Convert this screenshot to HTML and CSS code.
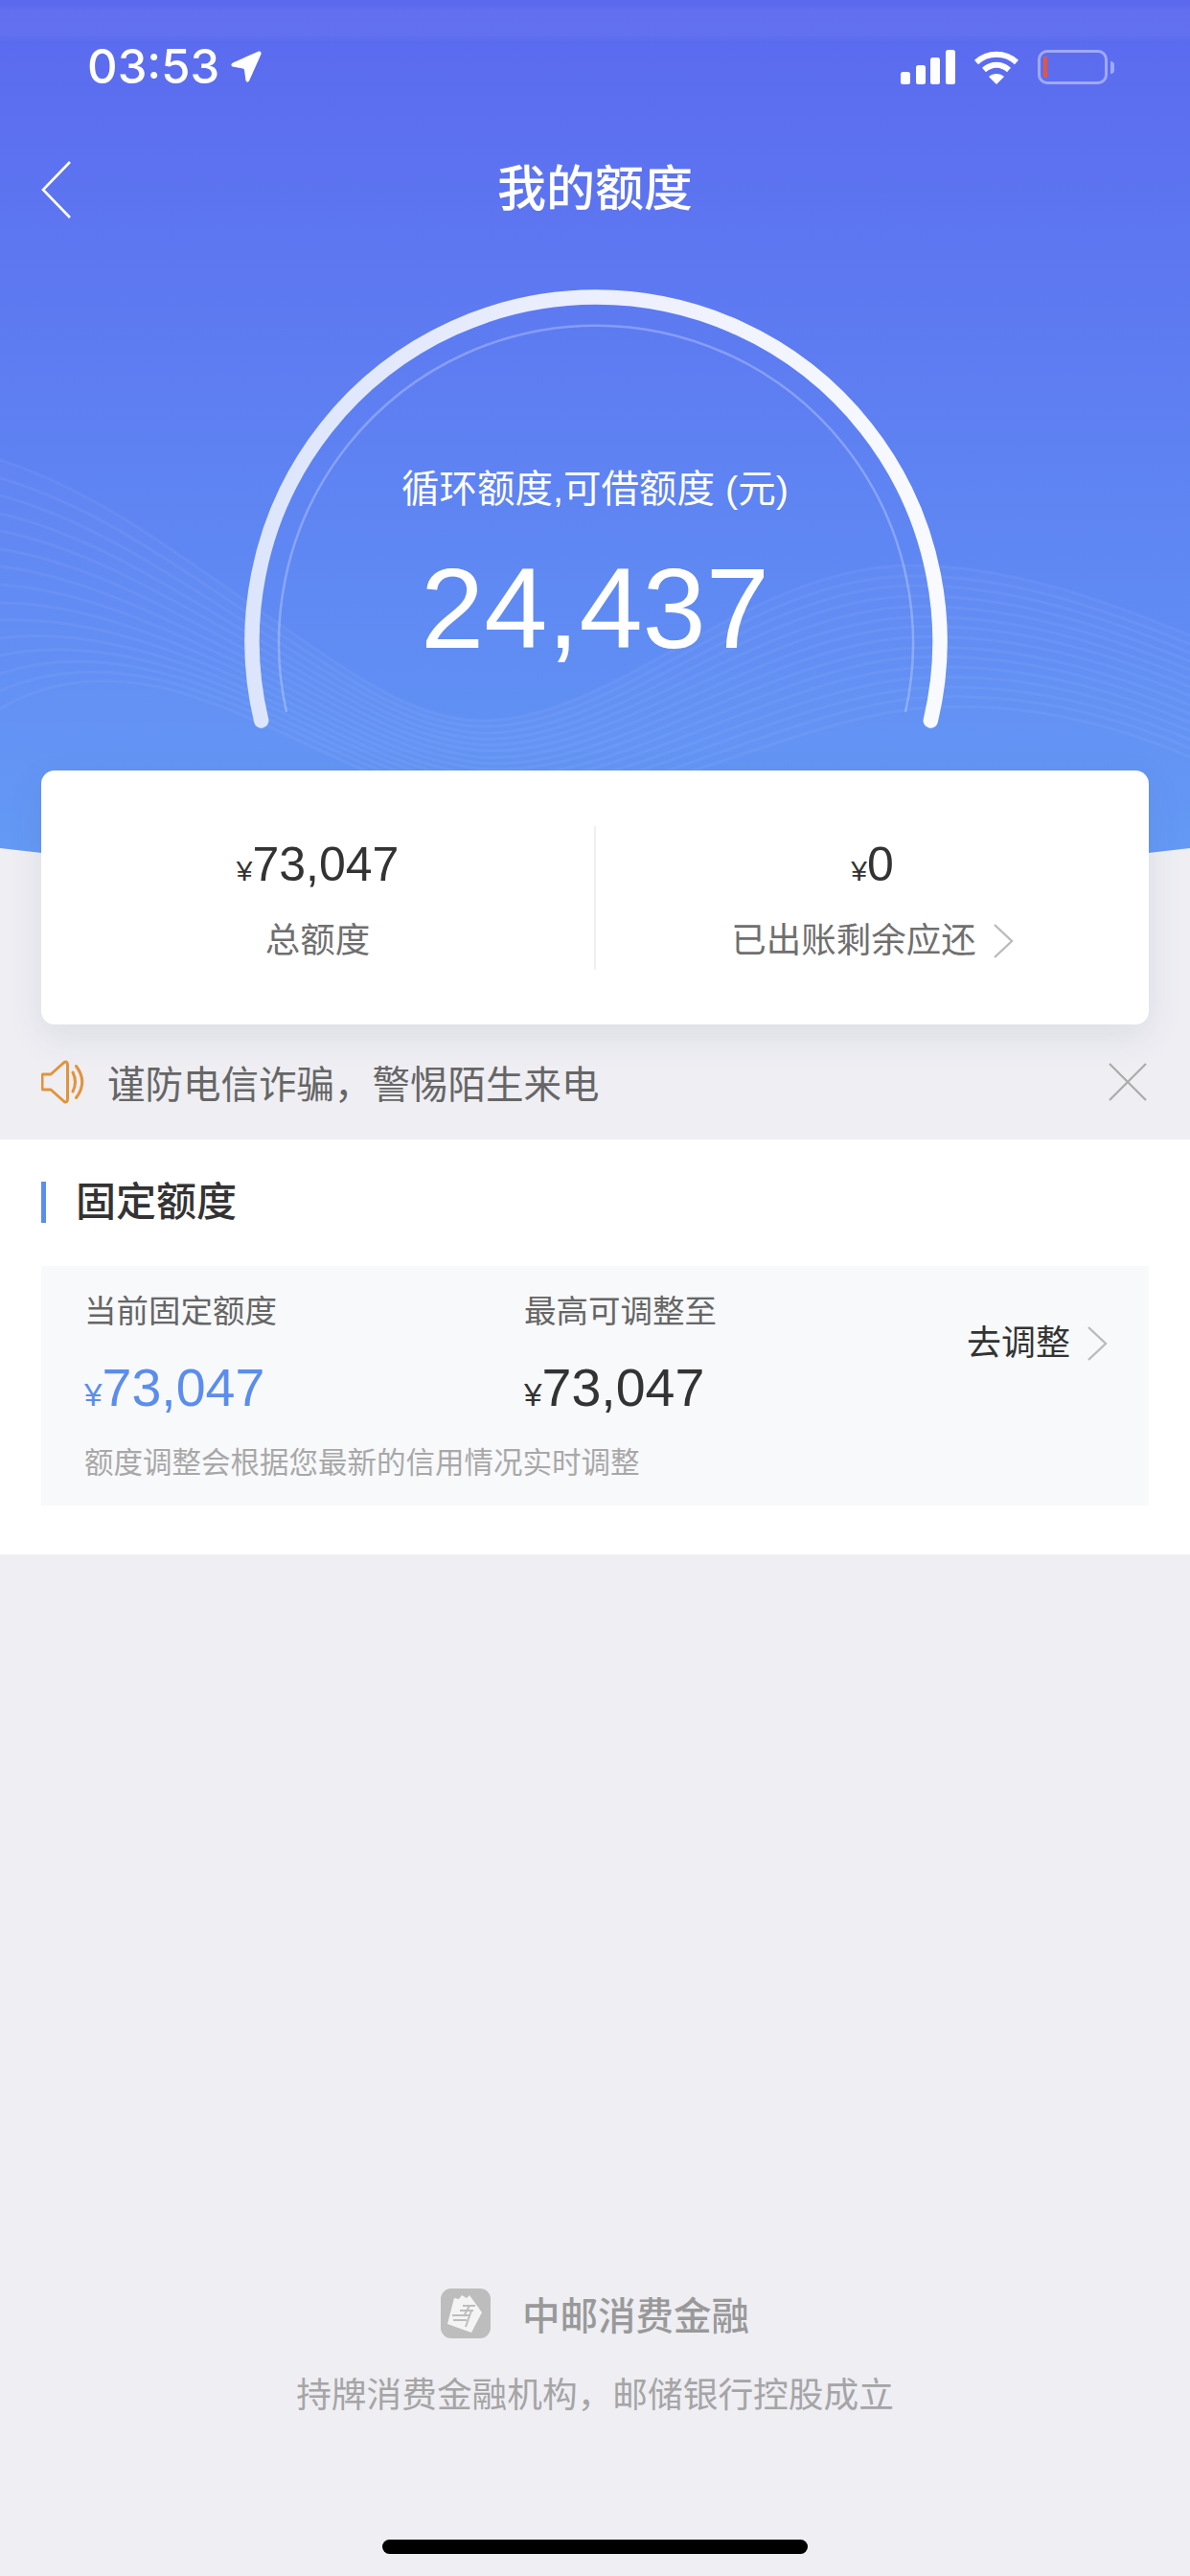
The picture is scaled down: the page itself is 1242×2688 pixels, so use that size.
FILE: index.html
```html
<!DOCTYPE html>
<html lang="zh-CN">
<head>
<meta charset="utf-8">
<title>我的额度</title>
<link rel="stylesheet" href="styles.css">
</head>
<body>
<div class="page">
  <svg class="hero-bg" width="1242" height="960" viewBox="0 0 1242 960">
    <defs>
      <linearGradient id="heroGrad" gradientUnits="userSpaceOnUse" x1="0" y1="0" x2="0" y2="900">
        <stop offset="0" stop-color="#5B69EF"/>
        <stop offset="1" stop-color="#6198F5"/>
      </linearGradient>
      <linearGradient id="bandGrad" x1="0" y1="0" x2="0" y2="1">
        <stop offset="0" stop-color="#fff" stop-opacity="0"/>
        <stop offset="0.2" stop-color="#fff" stop-opacity="0.045"/>
        <stop offset="0.8" stop-color="#fff" stop-opacity="0.04"/>
        <stop offset="1" stop-color="#fff" stop-opacity="0"/>
      </linearGradient>
      <clipPath id="heroClip"><path d="M0 0H1242V885Q621 960 0 885Z"/></clipPath>
    </defs>
    <path d="M0 0H1242V885Q621 960 0 885Z" fill="url(#heroGrad)"/>
    <rect x="0" y="4" width="1242" height="40" fill="url(#bandGrad)"/>
    <g clip-path="url(#heroClip)">
      <path class="wave-fill" d="M0 480C110 515 200 590 290 650C370 705 430 750 500 752C640 755 780 590 950 590C1060 590 1160 630 1242 663V960H0Z"/>
      <g class="wave-lines">
        <path d="M0 480C110 515 200 590 290 650C370 705 430 750 500 752C640 755 780 590 950 590C1060 590 1160 630 1242 663"/>
        <path d="M0 499C105 529 193 598 282 655C365 709 426 755 500 758C640 763 781 602 950 601C1059 600 1159 639 1242 672"/>
        <path d="M0 517C100 544 186 606 274 660C360 712 423 760 500 765C640 770 783 614 950 611C1059 610 1159 647 1242 681"/>
        <path d="M0 536C95 558 179 614 266 665C355 716 419 765 500 771C640 778 784 626 950 622C1058 620 1158 656 1242 690"/>
        <path d="M0 554C90 572 171 621 259 670C350 719 416 770 500 777C640 785 786 639 950 633C1057 630 1157 664 1242 699"/>
        <path d="M0 573C85 586 164 629 251 675C345 723 412 775 500 783C640 793 787 651 950 644C1056 640 1156 673 1242 708"/>
        <path d="M0 591C80 601 157 637 243 680C340 726 409 780 500 790C640 800 789 663 950 654C1056 650 1156 681 1242 717"/>
        <path d="M0 610C75 615 150 645 235 685C335 730 405 785 500 796C640 808 790 675 950 665C1055 660 1155 690 1242 726"/>
        <path d="M0 629C70 629 143 653 227 690C330 734 401 790 500 802C640 815 791 687 950 676C1054 670 1154 699 1242 736"/>
        <path d="M0 647C65 644 136 661 219 695C325 737 398 795 500 809C640 823 793 699 950 686C1054 680 1154 707 1242 745"/>
        <path d="M0 666C60 658 129 669 211 700C320 741 394 800 500 815C640 830 794 711 950 697C1053 690 1153 716 1242 754"/>
        <path d="M0 684C55 672 121 676 204 705C315 744 391 805 500 821C640 838 796 724 950 708C1052 700 1152 724 1242 763"/>
        <path d="M0 703C50 686 114 684 196 710C310 748 387 810 500 827C640 845 797 736 950 719C1051 710 1151 733 1242 772"/>
        <path d="M0 721C45 701 107 692 188 715C305 751 384 815 500 834C640 853 799 748 950 729C1051 720 1151 741 1242 781"/>
        <path d="M0 740C40 715 100 700 180 720C300 755 380 820 500 840C640 860 800 760 950 740C1050 730 1150 750 1242 790"/>
      </g>
    </g>
  </svg>

  <header class="status">
    <div class="status-left">
      <span class="time">03:53</span>
      <svg class="loc" width="32" height="34" viewBox="0 0 32 34"><path d="M29 0.500Q32 0 31.500 3.500L19 31.500Q17 34 15.500 31L14 20Q14 19 12.500 18.500L1.500 16.500Q-1 14.500 2 12.500Z" fill="#fff"/></svg>
    </div>
    <div class="status-right">
      <svg width="57" height="36" viewBox="0 0 57 36" fill="#fff">
        <rect x="0" y="23" width="10" height="13" rx="2.5"/>
        <rect x="16" y="16" width="10" height="20" rx="2.5"/>
        <rect x="31" y="8" width="10" height="28" rx="2.5"/>
        <rect x="47" y="0" width="10" height="36" rx="2.5"/>
      </svg>
      <svg class="wifi" width="48" height="36" viewBox="0 0 48 36" fill="none" stroke="#fff" stroke-width="6">
        <path d="M3 13C15 2 33 2 45 13"/>
        <path d="M11 21C19 14 29 14 37 21"/>
        <path d="M24 36L16 28C20 24 28 24 32 28Z" fill="#fff" stroke="none"/>
      </svg>
      <div class="battery"><div class="battery-level"></div></div>
      <div class="battery-cap"></div>
    </div>
  </header>

  <nav class="nav">
    <svg class="back" width="31" height="60" viewBox="0 0 31 60"><path d="M30 1L2 30L30 59" fill="none" stroke="#fff" stroke-width="2.6"/></svg>
    <h1 class="nav-title">我的额度</h1>
  </nav>

  <section class="gauge">
    <svg class="gauge-arc" width="760" height="480" viewBox="0 0 760 480">
      <defs>
        <linearGradient id="arcGrad" x1="0" y1="0" x2="1" y2="0">
          <stop offset="0" stop-color="#DCE5FB"/>
          <stop offset="0.5" stop-color="#ECEFFC"/>
          <stop offset="1" stop-color="#F8FAFF"/>
        </linearGradient>
      </defs>
      <path d="M30.700 450A359 359 0 1 1 729.300 450" fill="none" stroke="url(#arcGrad)" stroke-width="15.500" stroke-linecap="round"/>
      <path d="M57 441A331 331 0 1 1 703 441" fill="none" stroke="#fff" stroke-opacity="0.26" stroke-width="2.5"/>
    </svg>
    <p class="gauge-label">循环额度,可借额度 (元)</p>
    <p class="gauge-value">24,437</p>
  </section>

  <section class="card">
    <div class="card-cell">
      <div class="amount"><span class="yen">¥</span>73,047</div>
      <div class="card-label">总额度</div>
    </div>
    <div class="card-cell">
      <div class="amount"><span class="yen">¥</span>0</div>
      <div class="card-label">已出账剩余应还<svg class="chev" width="22" height="36" viewBox="0 0 22 36"><path d="M2 1L20 18L2 35" fill="none" stroke="#BBB" stroke-width="2.4"/></svg></div>
    </div>
  </section>

  <section class="notice">
    <svg class="speaker" width="46" height="46" viewBox="0 0 46 46" fill="none" stroke="#E2933B" stroke-width="3" stroke-linejoin="round" stroke-linecap="round">
      <path d="M2 15H10L24 2.5Q27.5 1 27.5 5V41Q27.5 45 24 43.5L10 31H2Q1 31 1 29V17Q1 15 2 15Z"/>
      <path d="M33 13Q38 23 33 33"/>
      <path d="M36.500 6.500Q49 23 36.500 39.500"/>
    </svg>
    <span class="notice-text">谨防电信诈骗，警惕陌生来电</span>
    <svg class="close" width="42" height="40" viewBox="0 0 42 40"><path d="M2 1L40 39M40 1L2 39" fill="none" stroke="#ABABAB" stroke-width="2.2"/></svg>
  </section>

  <section class="fixed">
    <h2 class="fixed-title">固定额度</h2>
    <div class="panel">
      <div class="panel-cols">
        <div class="panel-col">
          <div class="panel-label">当前固定额度</div>
          <div class="panel-amount blue"><span class="yen">¥</span>73,047</div>
        </div>
        <div class="panel-col">
          <div class="panel-label">最高可调整至</div>
          <div class="panel-amount"><span class="yen">¥</span>73,047</div>
        </div>
        <div class="adjust">去调整<svg class="chev" width="22" height="36" viewBox="0 0 22 36"><path d="M2 1L20 18L2 35" fill="none" stroke="#BBB" stroke-width="2.4"/></svg></div>
      </div>
      <div class="panel-note">额度调整会根据您最新的信用情况实时调整</div>
    </div>
  </section>

  <footer class="footer">
    <div class="brand">
      <svg class="logo" width="52" height="52" viewBox="0 0 52 52">
        <rect width="52" height="52" rx="11" fill="#BDBDBD"/>
        <path d="M14 10L19 11L22 7L27 10L30 7L43 25L32 46L7 37Z" fill="#F4F4F4"/>
        <path d="M23 18H36M20 23H34M12 28H30M13 33H27M30 18L24 29M32 23L26 40" fill="none" stroke="#BDBDBD" stroke-width="2"/>
      </svg>
      <span class="brand-name">中邮消费金融</span>
    </div>
    <p class="slogan">持牌消费金融机构，邮储银行控股成立</p>
    <div class="home-bar"></div>
  </footer>
</div>
</body>
</html>
```
FILE: styles.css
```css
* { box-sizing: border-box; }
html, body { margin: 0; padding: 0; }
body { width: 1242px; height: 2688px; overflow: hidden; font-family: "Liberation Sans", "Noto Sans CJK SC", sans-serif; }
h1, h2, p { margin: 0; font-weight: normal; }

.page { position: relative; width: 1242px; height: 2688px; background: #EEEEF3; display: flex; flex-direction: column; overflow: hidden; }
.hero-bg { position: absolute; left: 0; top: 0; }
.wave-fill { fill: #fff; fill-opacity: 0.018; }
.wave-lines { fill: none; stroke: #fff; stroke-opacity: 0.05; stroke-width: 3; }

.status { position: relative; height: 88px; padding: 52px 79px 0 91px; display: flex; justify-content: space-between; align-items: center; color: #fff; }
.status-left { display: flex; align-items: center; gap: 12px; }
.time { font-family: Inter, "Liberation Sans", sans-serif; font-size: 49px; font-weight: 500; line-height: 36px; }
.status-right { display: flex; align-items: center; }
.wifi { margin-left: 19px; }
.battery { width: 73px; height: 36px; margin-left: 19px; border: 3.5px solid rgba(255,255,255,.42); border-radius: 10px; padding: 4px 0 0 3px; }
.battery-level { width: 4px; height: 22px; background: #E8553A; }
.battery-cap { width: 4px; height: 13px; margin-left: 3px; background: rgba(255,255,255,.42); border-radius: 0 4px 4px 0; }

.nav { position: relative; height: 60px; margin-top: 80px; padding-left: 43px; display: flex; align-items: center; }
.back { flex: none; }
.nav-title { position: absolute; left: 0; right: 0; top: 0; line-height: 60px; text-align: center; font-size: 51px; font-weight: 500; color: #fff; }

.gauge { position: relative; height: 576px; display: flex; flex-direction: column; align-items: center; color: #fff; }
.gauge-arc { position: absolute; left: 242px; top: 74px; }
.gauge-label { position: relative; margin-top: 254px; font-size: 39.500px; line-height: 56px; text-align: center; }
.gauge-value { position: relative; margin-top: 32px; font-size: 119px; line-height: 130px; text-align: center; }

.card { position: relative; margin: 0 43px; height: 265px; background: #fff; border-radius: 14px; box-shadow: 0 12px 36px rgba(70,80,120,.10); display: flex; align-items: center; }
.card-cell { flex: 1; height: 150px; display: flex; flex-direction: column; align-items: center; padding-top: 12px; }
.card-cell + .card-cell { border-left: 2px solid #F0F0F2; }
.amount { font-size: 50px; line-height: 56px; color: #333; }
.yen { font-size: 0.6em; }
.card-label { margin-top: 20px; font-size: 36.500px; line-height: 50px; color: #6F6F6F; display: flex; align-items: center; }
.chev { flex: none; margin-left: 17px; }

.notice { position: relative; height: 120px; padding: 0 44px 0 43px; display: flex; align-items: center; }
.notice-text { margin-left: 23px; margin-top: -2px; flex: 1; font-size: 39.500px; color: #666; }

.fixed { position: relative; height: 433px; background: #fff; padding: 44px 43px 0; }
.fixed-title { border-left: 5px solid #5B8DEE; height: 43px; padding-left: 31px; font-size: 42px; line-height: 43px; font-weight: 500; color: #333; }
.panel { margin-top: 45px; height: 250px; background: #F8F9FB; padding: 23px 0 0 45px; }
.panel-cols { position: relative; display: flex; }
.panel-col { width: 459px; }
.panel-label { font-size: 33.500px; line-height: 50px; color: #666; }
.panel-amount { margin-top: 22px; font-size: 55.500px; line-height: 64px; color: #333; }
.panel-amount.blue { color: #5B8DEE; }
.adjust { margin-left: 3px; padding-top: 33px; font-size: 36px; line-height: 50px; color: #333; display: flex; align-items: flex-start; }
.adjust .chev { margin-top: 7px; }
.panel-note { margin-top: 16px; font-size: 30.500px; line-height: 44px; color: #A8A8A8; }

.footer { position: relative; margin-top: auto; display: flex; flex-direction: column; align-items: center; }
.brand { display: flex; align-items: center; height: 52px; }
.logo { flex: none; margin-top: 2px; }
.brand-name { margin-left: 33px; font-size: 39.500px; font-weight: 500; color: #999; }
.slogan { margin-top: 35px; font-size: 36.700px; line-height: 52px; color: #A5A5A5; }
.home-bar { width: 444px; height: 15px; margin-top: 124px; margin-bottom: 23px; background: #000; border-radius: 8px; }
```
